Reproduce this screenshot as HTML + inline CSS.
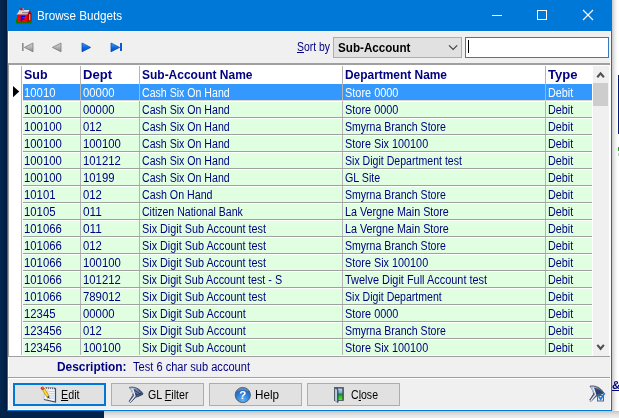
<!DOCTYPE html>
<html><head><meta charset="utf-8"><title>Browse Budgets</title>
<style>
*{box-sizing:border-box;margin:0;padding:0}
html,body{width:619px;height:418px;overflow:hidden;background:#fff}
body{position:relative;will-change:transform;font-family:"Liberation Sans",sans-serif;font-size:12px;color:#000080}
.abs{position:absolute}
.t{display:inline-block;transform-origin:0 50%;white-space:nowrap}
#leftstrip{left:0;top:0;width:7px;height:418px;background:linear-gradient(90deg,#05264e,#03224a 60%,#001a3c)}
#botstrip{left:0;top:411px;width:104px;height:7px;background:#03224a}
#shadowR{left:612px;top:0;width:7px;height:411px;background:linear-gradient(90deg,#c8c8c8,#ececec 40%,#fff 80%)}
#shadowB{left:104px;top:411px;width:515px;height:7px;background:linear-gradient(180deg,#c6c6c6,#e0e0e0 50%,#efefef)}
#edgeR{left:610px;top:31px;width:1px;height:379px;background:#fafafa}
#edgeB{left:8px;top:409px;width:603px;height:1px;background:#fafafa}
#navyR{left:618px;top:75px;width:1px;height:59px;background:#0a1c78}
#win{left:7px;top:0;width:605px;height:411px;background:#f0f0f0;border:1px solid #0078d7;border-top:none}
#title{left:7px;top:0;width:605px;height:31px;background:#0078d7}
#ttext{left:37px;top:8.5px;font-size:12.5px;color:#fff;white-space:nowrap;line-height:14px}
#hlT{left:8px;top:31px;width:603px;height:1px;background:#fff}
#hlL{left:8px;top:31px;width:1px;height:32px;background:#fff}
#hlL2{left:8px;top:357px;width:1px;height:52px;background:#fff}
#tbline{left:8px;top:63px;width:603px;height:2px;background:#a0a0a0}
.sortlbl{left:297px;top:40px;color:#000080;white-space:nowrap;line-height:14px}
#combo{left:333px;top:37px;width:129px;height:21px;background:#e1e1e1;border:1px solid #adadad}
#combo span{position:absolute;left:3.5px;top:3px;font-weight:bold;color:#000;line-height:14px}
#edit{left:465px;top:37px;width:144px;height:21px;background:#fff;border:1px solid #3a7abc}
#caret{left:468px;top:40px;width:1px;height:13px;background:#000}
#grid{left:8px;top:65px;width:602px;height:291px;background:#fff;border-left:1px solid #a0a0a0}
.hc{position:absolute;top:66px;height:17px;padding-top:1px;font-weight:bold;color:#000080;white-space:nowrap;line-height:17px;padding-left:2px;overflow:hidden}
.c{position:absolute;padding-top:1px;background:#e0ffe0;color:#000080;white-space:nowrap;line-height:17px;padding-left:2px;overflow:hidden}
.c.sel{background:#3399ff;color:#fff}
.hc span,.c span{display:inline-block;transform-origin:0 50%}
.vl{position:absolute;top:66px;width:1px;height:289px;background:#b4b4b4}
.hl{position:absolute;left:23px;width:569px;height:1px;background:#a0a0a0}
#sb{left:593px;top:66px;width:16px;height:290px;background:#f0f0f0}
#thumb{left:593px;top:83px;width:15px;height:23px;background:#cdcdcd}
#gridbot{left:8px;top:356px;width:603px;height:1px;background:#a0a0a0}
#descline{left:8px;top:377px;width:603px;height:1px;background:#a0a0a0}
#deschl{left:8px;top:378px;width:603px;height:1px;background:#fff}
#desclbl{left:57px;top:360px;font-weight:bold;line-height:14px}
#descval{left:132.5px;top:360px;line-height:14px}
.btn{position:absolute;top:383px;width:93px;height:23px;background:#e1e1e1;border:1px solid #adadad;color:#000}
.btn.def{border:2px solid #0078d7}
.btn span{position:absolute;top:4px;line-height:14px}
.btn.def span{top:3px}
u{text-decoration:underline}
#amp{left:612px;top:377.5px;font-weight:bold;color:#000080;font-size:11.5px;line-height:14px;text-decoration:underline}
</style></head><body>
<div class="abs" id="leftstrip"></div>
<div class="abs" id="botstrip"></div>
<div class="abs" id="shadowR"></div>
<div class="abs" id="shadowB"></div>
<div class="abs" id="navyR"></div>
<div class="abs" id="amp">&amp;</div>
<div class="abs" id="win"></div>
<div class="abs" id="title"></div>
<div class="abs" id="ttext"><span class="t" style="transform:scaleX(0.9337)">Browse Budgets</span></div>
<div class="abs" id="hlT"></div>
<div class="abs" id="hlL"></div>
<div class="abs" id="hlL2"></div>
<div class="abs" id="tbline"></div>
<div class="abs sortlbl"><span class="t" style="transform:scaleX(0.8681)"><u>S</u>ort by</span></div>
<div class="abs" id="combo"><span class="t" style="transform:scaleX(0.9709)">Sub-Account</span></div>
<div class="abs" id="edit"></div>
<div class="abs" id="caret"></div>
<div class="abs" id="grid"></div>
<div class="hc" style="left:23px;width:57px;padding-left:1px"><span style="transform:scaleX(1.0365)">Sub</span></div>
<div class="hc" style="left:81px;width:58px"><span style="transform:scaleX(1.0873)">Dept</span></div>
<div class="hc" style="left:140px;width:202px"><span style="transform:scaleX(0.9983)">Sub-Account Name</span></div>
<div class="hc" style="left:343px;width:202px"><span style="transform:scaleX(0.9932)">Department Name</span></div>
<div class="hc" style="left:546px;width:46px"><span style="transform:scaleX(1.0876)">Type</span></div>
<div class="c sel" style="left:23px;top:84px;width:57px;height:16px;padding-left:1px"><span style="transform:scaleX(0.9438)">10010</span></div>
<div class="c sel" style="left:81px;top:84px;width:58px;height:16px"><span style="transform:scaleX(0.9438)">00000</span></div>
<div class="c sel" style="left:140px;top:84px;width:202px;height:16px"><span style="transform:scaleX(0.8823)">Cash Six On Hand</span></div>
<div class="c sel" style="left:343px;top:84px;width:202px;height:16px"><span style="transform:scaleX(0.9098)">Store 0000</span></div>
<div class="c sel" style="left:546px;top:84px;width:46px;height:16px"><span style="transform:scaleX(0.8995)">Debit</span></div>
<div class="c" style="left:23px;top:102px;width:57px;height:15px;line-height:15px;padding-left:1px"><span style="transform:scaleX(0.9439)">100100</span></div>
<div class="c" style="left:81px;top:102px;width:58px;height:15px;line-height:15px"><span style="transform:scaleX(0.9438)">00000</span></div>
<div class="c" style="left:140px;top:102px;width:202px;height:15px;line-height:15px"><span style="transform:scaleX(0.8823)">Cash Six On Hand</span></div>
<div class="c" style="left:343px;top:102px;width:202px;height:15px;line-height:15px"><span style="transform:scaleX(0.9098)">Store 0000</span></div>
<div class="c" style="left:546px;top:102px;width:46px;height:15px;line-height:15px"><span style="transform:scaleX(0.8995)">Debit</span></div>
<div class="c" style="left:23px;top:119px;width:57px;height:15px;line-height:15px;padding-left:1px"><span style="transform:scaleX(0.9439)">100100</span></div>
<div class="c" style="left:81px;top:119px;width:58px;height:15px;line-height:15px"><span style="transform:scaleX(0.9435)">012</span></div>
<div class="c" style="left:140px;top:119px;width:202px;height:15px;line-height:15px"><span style="transform:scaleX(0.8823)">Cash Six On Hand</span></div>
<div class="c" style="left:343px;top:119px;width:202px;height:15px;line-height:15px"><span style="transform:scaleX(0.8787)">Smyrna Branch Store</span></div>
<div class="c" style="left:546px;top:119px;width:46px;height:15px;line-height:15px"><span style="transform:scaleX(0.8995)">Debit</span></div>
<div class="c" style="left:23px;top:136px;width:57px;height:15px;line-height:15px;padding-left:1px"><span style="transform:scaleX(0.9439)">100100</span></div>
<div class="c" style="left:81px;top:136px;width:58px;height:15px;line-height:15px"><span style="transform:scaleX(0.9439)">100100</span></div>
<div class="c" style="left:140px;top:136px;width:202px;height:15px;line-height:15px"><span style="transform:scaleX(0.8823)">Cash Six On Hand</span></div>
<div class="c" style="left:343px;top:136px;width:202px;height:15px;line-height:15px"><span style="transform:scaleX(0.9033)">Store Six 100100</span></div>
<div class="c" style="left:546px;top:136px;width:46px;height:15px;line-height:15px"><span style="transform:scaleX(0.8995)">Debit</span></div>
<div class="c" style="left:23px;top:153px;width:57px;height:15px;line-height:15px;padding-left:1px"><span style="transform:scaleX(0.9439)">100100</span></div>
<div class="c" style="left:81px;top:153px;width:58px;height:15px;line-height:15px"><span style="transform:scaleX(0.9439)">101212</span></div>
<div class="c" style="left:140px;top:153px;width:202px;height:15px;line-height:15px"><span style="transform:scaleX(0.8823)">Cash Six On Hand</span></div>
<div class="c" style="left:343px;top:153px;width:202px;height:15px;line-height:15px"><span style="transform:scaleX(0.881)">Six Digit Department test</span></div>
<div class="c" style="left:546px;top:153px;width:46px;height:15px;line-height:15px"><span style="transform:scaleX(0.8995)">Debit</span></div>
<div class="c" style="left:23px;top:170px;width:57px;height:15px;line-height:15px;padding-left:1px"><span style="transform:scaleX(0.9439)">100100</span></div>
<div class="c" style="left:81px;top:170px;width:58px;height:15px;line-height:15px"><span style="transform:scaleX(0.9438)">10199</span></div>
<div class="c" style="left:140px;top:170px;width:202px;height:15px;line-height:15px"><span style="transform:scaleX(0.8823)">Cash Six On Hand</span></div>
<div class="c" style="left:343px;top:170px;width:202px;height:15px;line-height:15px"><span style="transform:scaleX(0.8914)">GL Site</span></div>
<div class="c" style="left:546px;top:170px;width:46px;height:15px;line-height:15px"><span style="transform:scaleX(0.8995)">Debit</span></div>
<div class="c" style="left:23px;top:187px;width:57px;height:15px;line-height:15px;padding-left:1px"><span style="transform:scaleX(0.9438)">10101</span></div>
<div class="c" style="left:81px;top:187px;width:58px;height:15px;line-height:15px"><span style="transform:scaleX(0.9435)">012</span></div>
<div class="c" style="left:140px;top:187px;width:202px;height:15px;line-height:15px"><span style="transform:scaleX(0.8888)">Cash On Hand</span></div>
<div class="c" style="left:343px;top:187px;width:202px;height:15px;line-height:15px"><span style="transform:scaleX(0.8787)">Smyrna Branch Store</span></div>
<div class="c" style="left:546px;top:187px;width:46px;height:15px;line-height:15px"><span style="transform:scaleX(0.8995)">Debit</span></div>
<div class="c" style="left:23px;top:204px;width:57px;height:15px;line-height:15px;padding-left:1px"><span style="transform:scaleX(0.9438)">10105</span></div>
<div class="c" style="left:81px;top:204px;width:58px;height:15px;line-height:15px"><span style="transform:scaleX(0.9874)">011</span></div>
<div class="c" style="left:140px;top:204px;width:202px;height:15px;line-height:15px"><span style="transform:scaleX(0.8786)">Citizen National Bank</span></div>
<div class="c" style="left:343px;top:204px;width:202px;height:15px;line-height:15px"><span style="transform:scaleX(0.8944)">La Vergne Main Store</span></div>
<div class="c" style="left:546px;top:204px;width:46px;height:15px;line-height:15px"><span style="transform:scaleX(0.8995)">Debit</span></div>
<div class="c" style="left:23px;top:221px;width:57px;height:15px;line-height:15px;padding-left:1px"><span style="transform:scaleX(0.9439)">101066</span></div>
<div class="c" style="left:81px;top:221px;width:58px;height:15px;line-height:15px"><span style="transform:scaleX(0.9874)">011</span></div>
<div class="c" style="left:140px;top:221px;width:202px;height:15px;line-height:15px"><span style="transform:scaleX(0.9023)">Six Digit Sub Account test</span></div>
<div class="c" style="left:343px;top:221px;width:202px;height:15px;line-height:15px"><span style="transform:scaleX(0.8944)">La Vergne Main Store</span></div>
<div class="c" style="left:546px;top:221px;width:46px;height:15px;line-height:15px"><span style="transform:scaleX(0.8995)">Debit</span></div>
<div class="c" style="left:23px;top:238px;width:57px;height:15px;line-height:15px;padding-left:1px"><span style="transform:scaleX(0.9439)">101066</span></div>
<div class="c" style="left:81px;top:238px;width:58px;height:15px;line-height:15px"><span style="transform:scaleX(0.9435)">012</span></div>
<div class="c" style="left:140px;top:238px;width:202px;height:15px;line-height:15px"><span style="transform:scaleX(0.9023)">Six Digit Sub Account test</span></div>
<div class="c" style="left:343px;top:238px;width:202px;height:15px;line-height:15px"><span style="transform:scaleX(0.8787)">Smyrna Branch Store</span></div>
<div class="c" style="left:546px;top:238px;width:46px;height:15px;line-height:15px"><span style="transform:scaleX(0.8995)">Debit</span></div>
<div class="c" style="left:23px;top:255px;width:57px;height:15px;line-height:15px;padding-left:1px"><span style="transform:scaleX(0.9439)">101066</span></div>
<div class="c" style="left:81px;top:255px;width:58px;height:15px;line-height:15px"><span style="transform:scaleX(0.9439)">100100</span></div>
<div class="c" style="left:140px;top:255px;width:202px;height:15px;line-height:15px"><span style="transform:scaleX(0.9023)">Six Digit Sub Account test</span></div>
<div class="c" style="left:343px;top:255px;width:202px;height:15px;line-height:15px"><span style="transform:scaleX(0.9033)">Store Six 100100</span></div>
<div class="c" style="left:546px;top:255px;width:46px;height:15px;line-height:15px"><span style="transform:scaleX(0.8995)">Debit</span></div>
<div class="c" style="left:23px;top:272px;width:57px;height:15px;line-height:15px;padding-left:1px"><span style="transform:scaleX(0.9439)">101066</span></div>
<div class="c" style="left:81px;top:272px;width:58px;height:15px;line-height:15px"><span style="transform:scaleX(0.9439)">101212</span></div>
<div class="c" style="left:140px;top:272px;width:202px;height:15px;line-height:15px"><span style="transform:scaleX(0.8977)">Six Digit Sub Account test - S</span></div>
<div class="c" style="left:343px;top:272px;width:202px;height:15px;line-height:15px"><span style="transform:scaleX(0.9106)">Twelve Digit Full Account test</span></div>
<div class="c" style="left:546px;top:272px;width:46px;height:15px;line-height:15px"><span style="transform:scaleX(0.8995)">Debit</span></div>
<div class="c" style="left:23px;top:289px;width:57px;height:15px;line-height:15px;padding-left:1px"><span style="transform:scaleX(0.9439)">101066</span></div>
<div class="c" style="left:81px;top:289px;width:58px;height:15px;line-height:15px"><span style="transform:scaleX(0.9439)">789012</span></div>
<div class="c" style="left:140px;top:289px;width:202px;height:15px;line-height:15px"><span style="transform:scaleX(0.9023)">Six Digit Sub Account test</span></div>
<div class="c" style="left:343px;top:289px;width:202px;height:15px;line-height:15px"><span style="transform:scaleX(0.8793)">Six Digit Department</span></div>
<div class="c" style="left:546px;top:289px;width:46px;height:15px;line-height:15px"><span style="transform:scaleX(0.8995)">Debit</span></div>
<div class="c" style="left:23px;top:306px;width:57px;height:15px;line-height:15px;padding-left:1px"><span style="transform:scaleX(0.9438)">12345</span></div>
<div class="c" style="left:81px;top:306px;width:58px;height:15px;line-height:15px"><span style="transform:scaleX(0.9438)">00000</span></div>
<div class="c" style="left:140px;top:306px;width:202px;height:15px;line-height:15px"><span style="transform:scaleX(0.9049)">Six Digit Sub Account</span></div>
<div class="c" style="left:343px;top:306px;width:202px;height:15px;line-height:15px"><span style="transform:scaleX(0.9098)">Store 0000</span></div>
<div class="c" style="left:546px;top:306px;width:46px;height:15px;line-height:15px"><span style="transform:scaleX(0.8995)">Debit</span></div>
<div class="c" style="left:23px;top:323px;width:57px;height:15px;line-height:15px;padding-left:1px"><span style="transform:scaleX(0.9439)">123456</span></div>
<div class="c" style="left:81px;top:323px;width:58px;height:15px;line-height:15px"><span style="transform:scaleX(0.9435)">012</span></div>
<div class="c" style="left:140px;top:323px;width:202px;height:15px;line-height:15px"><span style="transform:scaleX(0.9049)">Six Digit Sub Account</span></div>
<div class="c" style="left:343px;top:323px;width:202px;height:15px;line-height:15px"><span style="transform:scaleX(0.8787)">Smyrna Branch Store</span></div>
<div class="c" style="left:546px;top:323px;width:46px;height:15px;line-height:15px"><span style="transform:scaleX(0.8995)">Debit</span></div>
<div class="c" style="left:23px;top:340px;width:57px;height:15px;line-height:15px;padding-left:1px"><span style="transform:scaleX(0.9439)">123456</span></div>
<div class="c" style="left:81px;top:340px;width:58px;height:15px;line-height:15px"><span style="transform:scaleX(0.9439)">100100</span></div>
<div class="c" style="left:140px;top:340px;width:202px;height:15px;line-height:15px"><span style="transform:scaleX(0.9049)">Six Digit Sub Account</span></div>
<div class="c" style="left:343px;top:340px;width:202px;height:15px;line-height:15px"><span style="transform:scaleX(0.9033)">Store Six 100100</span></div>
<div class="c" style="left:546px;top:340px;width:46px;height:15px;line-height:15px"><span style="transform:scaleX(0.8995)">Debit</span></div>
<div class="vl" style="left:21px"></div>
<div class="vl" style="left:80px"></div>
<div class="vl" style="left:139px"></div>
<div class="vl" style="left:342px"></div>
<div class="vl" style="left:545px"></div>
<div class="hl" style="top:100px;background:#dcd6d6"></div>
<div class="hl" style="top:117px"></div>
<div class="hl" style="top:134px"></div>
<div class="hl" style="top:151px"></div>
<div class="hl" style="top:168px"></div>
<div class="hl" style="top:185px"></div>
<div class="hl" style="top:202px"></div>
<div class="hl" style="top:219px"></div>
<div class="hl" style="top:236px"></div>
<div class="hl" style="top:253px"></div>
<div class="hl" style="top:270px"></div>
<div class="hl" style="top:287px"></div>
<div class="hl" style="top:304px"></div>
<div class="hl" style="top:321px"></div>
<div class="hl" style="top:338px"></div>
<div class="abs" id="sb"></div>
<div class="abs" id="thumb"></div>
<div class="abs" id="gridbot"></div>
<div class="abs" id="descline"></div>
<div class="abs" id="deschl"></div>
<div class="abs" id="desclbl"><span class="t" style="transform:scaleX(0.9926)">Description:</span></div>
<div class="abs" id="descval"><span class="t" style="transform:scaleX(0.9231)">Test 6 char sub account</span></div>
<div class="btn def" style="left:13px"><span class="t" style="left:46px;transform:scaleX(0.8943)"><u>E</u>dit</span></div>
<div class="btn" style="left:111px"><span class="t" style="left:36px;transform:scaleX(0.8889)">GL <u>F</u>ilter</span></div>
<div class="btn" style="left:209px"><span class="t" style="left:44.5px;transform:scaleX(0.9722)">Help</span></div>
<div class="btn" style="left:307px"><span class="t" style="left:42.5px;transform:scaleX(0.8798)">C<u>l</u>ose</span></div>
<div class="abs" id="edgeR"></div>
<div class="abs" id="edgeB"></div>
<svg class="abs" style="left:0;top:0" width="619" height="418" viewBox="0 0 619 418">
<defs>
<linearGradient id="gG" x1="0" y1="0" x2="0" y2="1"><stop offset="0" stop-color="#d4d4d4"/><stop offset="0.5" stop-color="#b4b4b4"/><stop offset="1" stop-color="#8a8a8a"/></linearGradient>
<linearGradient id="gB" x1="0" y1="0" x2="0" y2="1"><stop offset="0" stop-color="#58acff"/><stop offset="0.45" stop-color="#1070e0"/><stop offset="1" stop-color="#0048b4"/></linearGradient>
<linearGradient id="gF" x1="0" y1="0" x2="1" y2="1"><stop offset="0" stop-color="#d8e0ec"/><stop offset="0.5" stop-color="#5a6c8c"/><stop offset="1" stop-color="#1c2c4c"/></linearGradient>
<radialGradient id="gH" cx="0.5" cy="0.85" r="0.9"><stop offset="0" stop-color="#5cb4f8"/><stop offset="0.55" stop-color="#2a7cd4"/><stop offset="1" stop-color="#1c4c94"/></radialGradient>
</defs>
<!-- title icon -->
<g id="ticon">
<path d="M16 18.5h12l3.6 1.5v3.4h-15.6z" fill="#008000"/>
<path d="M27.2 14.6l2.3-4.3l2 3.4v6.800l-4.300 1.800z" fill="#a80000"/>
<path d="M29.1 14.200h1.200v6h-1.200z" fill="#c8b0b0"/>
<path d="M19.500 10.200h9.800l-2.100 4.500h-10.800z" fill="#d4d4d4"/>
<path d="M19.500 10.200h9.800l-.4.900h-9.900z" fill="#ececec"/>
<path d="M22.200 12.200h6v1.100h-6z" fill="#787878"/>
<path d="M17 14.600h10.200v7.600h-10.200z" fill="#ff0000"/>
<path d="M20.700 15.800h4.300v1.300h-2.800v1.100h2.200v1.200h-2.200v1.800h-1.500z" fill="#0000ff"/>
<path d="M20.300 8.300h3.700v2h-3.700z" fill="#e00000"/>
<path d="M22.600 8.500h1.200v1h-1.200z" fill="#ffffff"/>
</g>
<!-- title controls -->
<path d="M492 15.5h10" stroke="#fff" stroke-width="1"/>
<rect x="537.5" y="10.5" width="9" height="9" fill="none" stroke="#fff" stroke-width="1"/>
<path d="M583 10l10 10M593 10l-10 10" stroke="#fff" stroke-width="1.1"/>
<rect x="618" y="147" width="1" height="4" fill="#2aa02a"/><rect x="618" y="153" width="1" height="3" fill="#a8d8a8"/>
<!-- nav -->
<rect x="22" y="43" width="1.6" height="8" fill="#8a8a8a"/>
<path d="M33 43v8.8l-8.6-4.4z" fill="url(#gG)" stroke="#7c7c7c" stroke-width="0.8"/>
<path d="M61 43v8.8l-8.6-4.4z" fill="url(#gG)" stroke="#7c7c7c" stroke-width="0.8"/>
<path d="M82 43v8.8l8.6-4.4z" fill="url(#gB)" stroke="#0a4cb8" stroke-width="0.8"/>
<path d="M111 43v8.8l8.6-4.4z" fill="url(#gB)" stroke="#0a4cb8" stroke-width="0.8"/>
<rect x="120" y="43" width="2" height="8" fill="#0a5cd0"/>
<!-- combo arrow -->
<path d="M449 45.400l4.100 4.100l4.100-4.100" fill="none" stroke="#444" stroke-width="1.200"/>
<!-- row indicator -->
<path d="M13 86l6.2 5.6l-6.2 5.6z" fill="#000"/>
<!-- scroll arrows -->
<path d="M597.300 77.300l3.300-3.900l3.300 3.900" fill="none" stroke="#505050" stroke-width="2.100"/>
<path d="M597.300 344.900l3.300 3.900l3.300-3.900" fill="none" stroke="#505050" stroke-width="2.100"/>
<!-- edit icon -->
<g id="iedit">
<path d="M45 387.4L55.7 388V402.2L43.7 399.6Z" fill="#f2f6fc"/>
<path d="M55.5 388V402L43.9 399.5" fill="none" stroke="#444c58" stroke-width="1.2"/>
<path d="M45 387.5L55.5 388" fill="none" stroke="#98a4b4" stroke-width="0.8"/>
<path d="M45 387.6L43.9 399.4" fill="none" stroke="#a8b0bc" stroke-width="0.7"/>
<path d="M46.6 387.3v1.6M48.6 387.4v1.6M50.6 387.5v1.6M52.6 387.6v1.6M54.4 387.7v1.6" stroke="#3c4450" stroke-width="0.8"/>
<path d="M49 391.5h5.6M49 393.7h5.6M49 395.9h5.6M48.8 398.1h5.8" stroke="#b4c8e8" stroke-width="0.8"/>
<path d="M47.9 389.5L47.5 400" stroke="#e89090" stroke-width="0.6"/>
<path d="M42.3 389.9L44.600 388.5L49.1 395.7L46.9 397.1Z" fill="#f6c800" stroke="#a87c00" stroke-width="0.5"/>
<path d="M43.400 389.300L47.900 396.400" stroke="#fff09a" stroke-width="0.6"/>
<path d="M46.9 397.1L49.1 395.700L49.5 398.7Z" fill="#4a3a28"/>
<circle cx="42.5" cy="388.3" r="1.7" fill="#e02828"/>
<circle cx="42.9" cy="387.8" r="0.6" fill="#ffc0c0"/>
</g>
<!-- funnel (GL Filter) -->
<g id="ifun">
<path d="M129.400 387.400C133.500 386.400 139.500 388 143.100 394C140.500 395.800 138 396.600 135.800 397.200L130.400 402.600L129.100 401.300L133 395.200C132.600 392.200 131.300 389.600 129.400 387.400Z" fill="url(#gF)" stroke="#16244c" stroke-width="0.7"/>
<path d="M133.200 389C136.500 389.500 139.500 391.200 141.500 393.800C139.500 394.800 137.500 395.500 135.500 395.900C135.300 393.500 134.500 391 133.200 389Z" fill="#1e2e66" opacity="0.75"/>
<path d="M132.600 388.600L135 395.800L130 402" fill="none" stroke="#f4f6fa" stroke-width="1.1"/>
<path d="M130.600 388.400C131.800 390 132.600 392 132.900 394" fill="none" stroke="#e0e6f0" stroke-width="0.8"/>
<path d="M135.500 389.800l4.500 3M135 391.800l3.500 2.300" stroke="#c8d0e4" stroke-width="0.5"/>
</g>
<!-- help icon -->
<circle cx="242.800" cy="395" r="7.600" fill="url(#gH)" stroke="#56606e" stroke-width="1"/>
<path d="M237 391.500a6.200 6.200 0 0 1 11.600 0a12 12 0 0 0 -11.600 0z" fill="#fff" opacity="0.25"/>
<text x="242.800" y="399.200" font-family="Liberation Sans" font-weight="bold" font-size="11.500" fill="#fff" text-anchor="middle">?</text>
<!-- close icon (door) -->
<g id="idoor">
<defs><linearGradient id="gD" x1="0" y1="0" x2="0" y2="1"><stop offset="0" stop-color="#b8dcf8"/><stop offset="0.35" stop-color="#78b0c8"/><stop offset="0.5" stop-color="#2c7c50"/><stop offset="0.7" stop-color="#2cc420"/><stop offset="1" stop-color="#48f030"/></linearGradient></defs>
<rect x="334" y="387.200" width="9.800" height="13.600" fill="#3e4246"/>
<rect x="337.800" y="388.500" width="4.600" height="11.500" fill="url(#gD)"/>
<path d="M334.600 388.100L337.800 389.600V402.600L334.600 400.400Z" fill="#b4d0ea" stroke="#39434e" stroke-width="0.5"/>
<path d="M337.800 389.600V402.600" stroke="#222a34" stroke-width="0.8"/>
</g>
<!-- bottom-right filter+check -->
<g id="ibr">
<g transform="translate(460.6,-1.2)">
<path d="M129.400 387.400C133.500 386.400 139.500 388 143.100 394C140.500 395.800 138 396.600 135.800 397.200L130.400 402.600L129.100 401.300L133 395.200C132.600 392.200 131.300 389.600 129.400 387.400Z" fill="url(#gF)" stroke="#16244c" stroke-width="0.7"/>
<path d="M133.200 389C136.500 389.500 139.500 391.200 141.500 393.800C139.500 394.800 137.500 395.500 135.500 395.900C135.300 393.500 134.500 391 133.200 389Z" fill="#1e2e66" opacity="0.75"/>
<path d="M132.600 388.600L135 395.800L130 402" fill="none" stroke="#f4f6fa" stroke-width="1.1"/>
<path d="M130.600 388.400C131.800 390 132.600 392 132.900 394" fill="none" stroke="#e0e6f0" stroke-width="0.800"/>
</g>
<rect x="597.500" y="395.500" width="6" height="5.500" fill="#dfe6f2" stroke="#4a5878" stroke-width="0.900"/>
<path d="M598.600 396.300l2.100 2.900l4-6.200" fill="none" stroke="#1e7fd6" stroke-width="1.700"/>
</g>
</svg>

</body></html>
